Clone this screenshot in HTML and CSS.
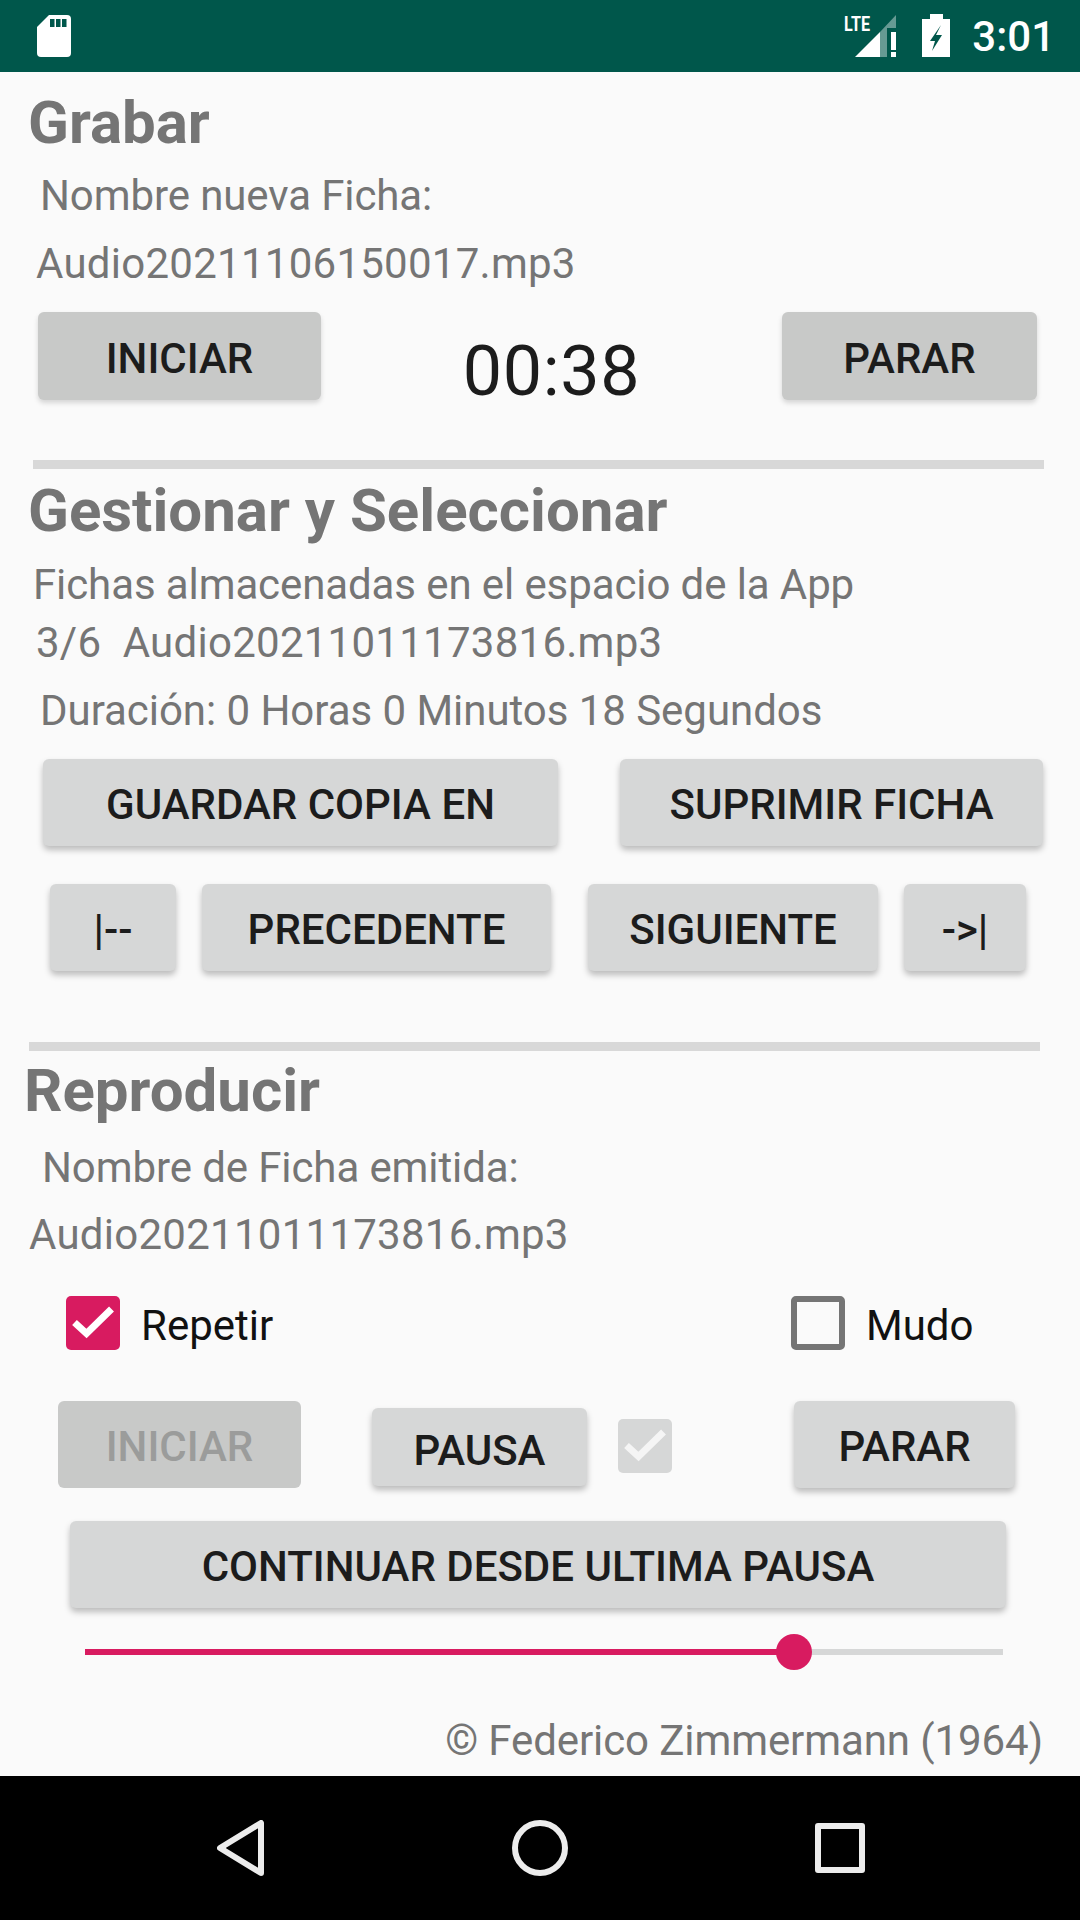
FILE: index.html
```html
<!DOCTYPE html>
<html>
<head>
    <meta charset="UTF-8">
    <title>Grabar</title>
    <link rel="stylesheet" href="styles.css">
</head>
<body>
    <header class="status-bar">
        <svg class="sd-icon" width="34" height="42" viewBox="0 0 34 42">
            <path fill="#fff" d="M12 0H30a4 4 0 0 1 4 4V38a4 4 0 0 1-4 4H4a4 4 0 0 1-4-4V12Z"/>
            <rect x="13" y="4" width="4.5" height="8" fill="#00574b"/>
            <rect x="19" y="4" width="4.5" height="8" fill="#00574b"/>
            <rect x="25" y="4" width="4.5" height="8" fill="#00574b"/>
        </svg>
        <div class="status-right">
            <svg class="signal-icon" width="106" height="60" viewBox="0 -8 106 60">
                <text x="0" y="17" class="lte-text" textLength="26" lengthAdjust="spacingAndGlyphs">LTE</text>
                <path fill="#fff" fill-opacity="0.4" d="M36 18 52 1V14H43V43H36Z"/>
                <path fill="#fff" d="M11 43 36 18V43Z"/>
                <rect x="47" y="18" width="5" height="18" fill="#fff"/>
                <rect x="47" y="38" width="5" height="5" fill="#fff"/>
                <path fill="#fff" d="M86 0H99V5H106V43H78V5H86Z"/>
                <path fill="#00574b" d="M97 11 86 27H91L88 37 98 21H92Z"/>
            </svg>
            <span class="clock">3:01</span>
        </div>
    </header>

    <main class="content">
        <h2 class="title title-grabar">Grabar</h2>
        <p class="text text-nueva">Nombre nueva Ficha:</p>
        <p class="text text-digits text-audio1">Audio20211106150017.mp3</p>

        <div class="rec-row">
            <button class="btn btn-dark btn-rec-start">INICIAR</button>
            <span class="timer">00:38</span>
            <button class="btn btn-dark btn-rec-stop">PARAR</button>
        </div>

        <div class="divider divider-one"></div>

        <h2 class="title title-gestionar">Gestionar y Seleccionar</h2>
        <p class="text text-fichas">Fichas almacenadas en el espacio de la App</p>
        <p class="text text-digits text-pos">3/6&nbsp; Audio20211011173816.mp3</p>
        <p class="text text-duracion">Duración: 0 Horas 0 Minutos 18 Segundos</p>

        <div class="manage-row">
            <button class="btn btn-guardar">GUARDAR COPIA EN</button>
            <button class="btn btn-suprimir">SUPRIMIR FICHA</button>
        </div>
        <div class="nav-row">
            <button class="btn btn-first">|--</button>
            <button class="btn btn-prev">PRECEDENTE</button>
            <button class="btn btn-next">SIGUIENTE</button>
            <button class="btn btn-last">-&gt;|</button>
        </div>

        <div class="divider divider-two"></div>

        <h2 class="title title-reproducir">Reproducir</h2>
        <p class="text text-emitida">Nombre de Ficha emitida:</p>
        <p class="text text-digits text-audio2">Audio20211011173816.mp3</p>

        <div class="check-row">
            <div class="check-item">
                <span class="check check-on">
                    <svg width="54" height="54" viewBox="0 0 54 54"><path d="M8.5 26.5 20.5 37.5 45.5 13" class="tick"/></svg>
                </span>
                <span class="check-label">Repetir</span>
            </div>
            <div class="check-item">
                <span class="check check-off"></span>
                <span class="check-label">Mudo</span>
            </div>
        </div>

        <div class="play-row">
            <button class="btn btn-disabled btn-play-start">INICIAR</button>
            <button class="btn btn-pausa">PAUSA</button>
            <span class="check check-disabled">
                <svg width="54" height="54" viewBox="0 0 54 54"><path d="M8.5 26.5 20.5 37.5 45.5 13" class="tick"/></svg>
            </span>
            <button class="btn btn-play-stop">PARAR</button>
        </div>

        <button class="btn btn-continuar">CONTINUAR DESDE ULTIMA PAUSA</button>

        <div class="slider">
            <div class="slider-track">
                <div class="slider-fill"></div>
                <div class="slider-thumb"></div>
            </div>
        </div>

        <p class="text text-copy">© Federico Zimmermann (1964)</p>
    </main>

    <footer class="nav-bar">
        <svg width="47" height="56" viewBox="0 0 47 56">
            <path d="M44 3V53L3 28Z" class="nav-stroke"/>
        </svg>
        <svg width="56" height="56" viewBox="0 0 56 56">
            <circle cx="28" cy="28" r="25" class="nav-stroke"/>
        </svg>
        <svg class="nav-square" width="50" height="50" viewBox="0 0 50 50">
            <rect x="3" y="3" width="44" height="44" class="nav-stroke"/>
        </svg>
    </footer>
</body>
</html>
```

FILE: styles.css
```css
* {
    box-sizing: border-box;
}
body {
    margin: 0;
    width: 1080px;
    height: 1920px;
    overflow: hidden;
    background-color: #fafafa;
    font-family: Roboto, "Liberation Sans", sans-serif;
}

/* status bar */
.status-bar {
    height: 72px;
    background-color: #00574b;
    display: flex;
    justify-content: space-between;
    align-items: center;
    padding: 0 25px 0 37px;
    color: #fff;
}
.status-right {
    display: flex;
    align-items: center;
    gap: 22px;
}
.lte-text {
    font-family: Roboto, sans-serif;
    font-weight: 700;
    font-size: 21px;
    fill: #fff;
}
.clock {
    font-size: 42px;
    font-weight: 500;
}

/* main column */
.content {
    height: 1704px;
    overflow: hidden;
}
.title {
    margin: 0;
    height: 72px;
    line-height: 73px;
    font-size: 60px;
    font-weight: 700;
    color: #757575;
}
.text {
    margin: 0;
    height: 56px;
    line-height: 58px;
    font-size: 42px;
    letter-spacing: -0.1px;
    color: #757575;
    white-space: nowrap;
}
.text-digits { letter-spacing: 0.26px; }
.title-grabar { margin: 14px 0 0 28px; }
.text-nueva { margin: 9px 0 0 40px; }
.text-audio1 { margin: 12px 0 0 36px; }
.title-gestionar { margin: 5px 0 0 28px; }
.text-fichas { margin: 10px 0 0 33px; }
.text-pos { margin: 2px 0 0 36px; }
.text-duracion { margin: 12px 0 0 40px; letter-spacing: -0.04px; }
.title-reproducir { margin: 3px 0 0 24px; }
.text-emitida { margin: 13px 0 0 42px; }
.text-audio2 { margin: 11px 0 0 29px; }
.text-copy { margin: 42px 37px 0 0; text-align: right; }

.divider {
    height: 9px;
    background-color: #d8d8d8;
}
.divider-one { margin: 60px 36px 0 33px; }
.divider-two { margin: 71px 40px 0 29px; }

/* buttons */
.btn {
    display: block;
    height: 87px;
    padding: 3px 0 0;
    border: none;
    border-radius: 6px;
    background-color: #d6d7d7;
    color: #1c1c1c;
    font-family: inherit;
    font-size: 42px;
    font-weight: 500;
    box-shadow: 0 4px 6px rgba(0, 0, 0, 0.25);
}
.btn-dark {
    height: 88px;
    padding-top: 5px;
    background-color: #c8c9c8;
    box-shadow: 0 3px 5px rgba(0, 0, 0, 0.15);
}
.btn-disabled {
    background-color: #c8c9c8;
    color: #9b9c9b;
    box-shadow: none;
}

.rec-row {
    margin-top: 21px;
    height: 88px;
    padding: 0 43px 0 38px;
    display: flex;
    justify-content: space-between;
}
.btn-rec-start { width: 283px; }
.btn-rec-stop { width: 255px; }
.timer {
    margin: 15px 0 0 0;
    height: 88px;
    line-height: 88px;
    font-size: 70px;
    letter-spacing: 0.6px;
    color: #1c1c1c;
}

.manage-row {
    margin-top: 21px;
    padding: 0 37px 0 43px;
    display: flex;
    justify-content: space-between;
}
.btn-guardar { width: 515px; }
.btn-suprimir { width: 423px; }

.nav-row {
    margin-top: 38px;
    padding-left: 50px;
    display: flex;
}
.btn-first { width: 126px; }
.btn-prev { width: 349px; margin-left: 26px; }
.btn-next { width: 290px; margin-left: 37px; }
.btn-last { width: 122px; margin-left: 26px; }

/* checkboxes */
.check-row {
    margin-top: 34px;
    height: 54px;
    display: flex;
    padding-left: 66px;
}
.check-item {
    display: flex;
    align-items: center;
    gap: 21px;
}
.check-row .check-item:first-child {
    width: 725px;
}
.check-label {
    margin-top: 4px;
    font-size: 42px;
    color: #111;
}
.check {
    display: block;
    height: 54px;
    width: 54px;
    border-radius: 5px;
}
.check-on { background-color: #d81b60; }
.check-off { border: 6px solid #757575; }
.check-disabled { background-color: #d6d7d7; margin: 18px 0 0 31px; }
.tick {
    fill: none;
    stroke: #fff;
    stroke-width: 7;
}
.check-disabled .tick { stroke: #f5f5f5; }

.play-row {
    margin-top: 51px;
    height: 87px;
    padding-left: 58px;
    display: flex;
    align-items: flex-start;
}
.btn-play-start { width: 243px; }
.btn-pausa {
    width: 215px;
    height: 78px;
    margin: 7px 0 0 71px;
    padding-top: 6px;
}
.btn-play-stop { width: 221px; margin-left: 122px; }

.btn-continuar {
    width: 936px;
    margin: 33px 0 0 70px;
}

/* slider */
.slider {
    margin: 26px 77px 0 85px;
    height: 36px;
    display: flex;
    align-items: center;
}
.slider-track {
    position: relative;
    width: 100%;
    height: 6px;
    background-color: #d6d7d7;
}
.slider-fill {
    width: 709px;
    height: 6px;
    background-color: #d81b60;
}
.slider-thumb {
    position: absolute;
    left: 691px;
    top: -15px;
    width: 36px;
    height: 36px;
    border-radius: 50%;
    background-color: #d81b60;
}

/* navigation bar */
.nav-bar {
    height: 144px;
    background-color: #000;
    display: flex;
    align-items: center;
    padding-left: 217px;
    gap: 248px;
}
.nav-square { margin-left: -1px; }
.nav-stroke {
    fill: none;
    stroke: #ececec;
    stroke-width: 6;
    stroke-linejoin: round;
}
```
